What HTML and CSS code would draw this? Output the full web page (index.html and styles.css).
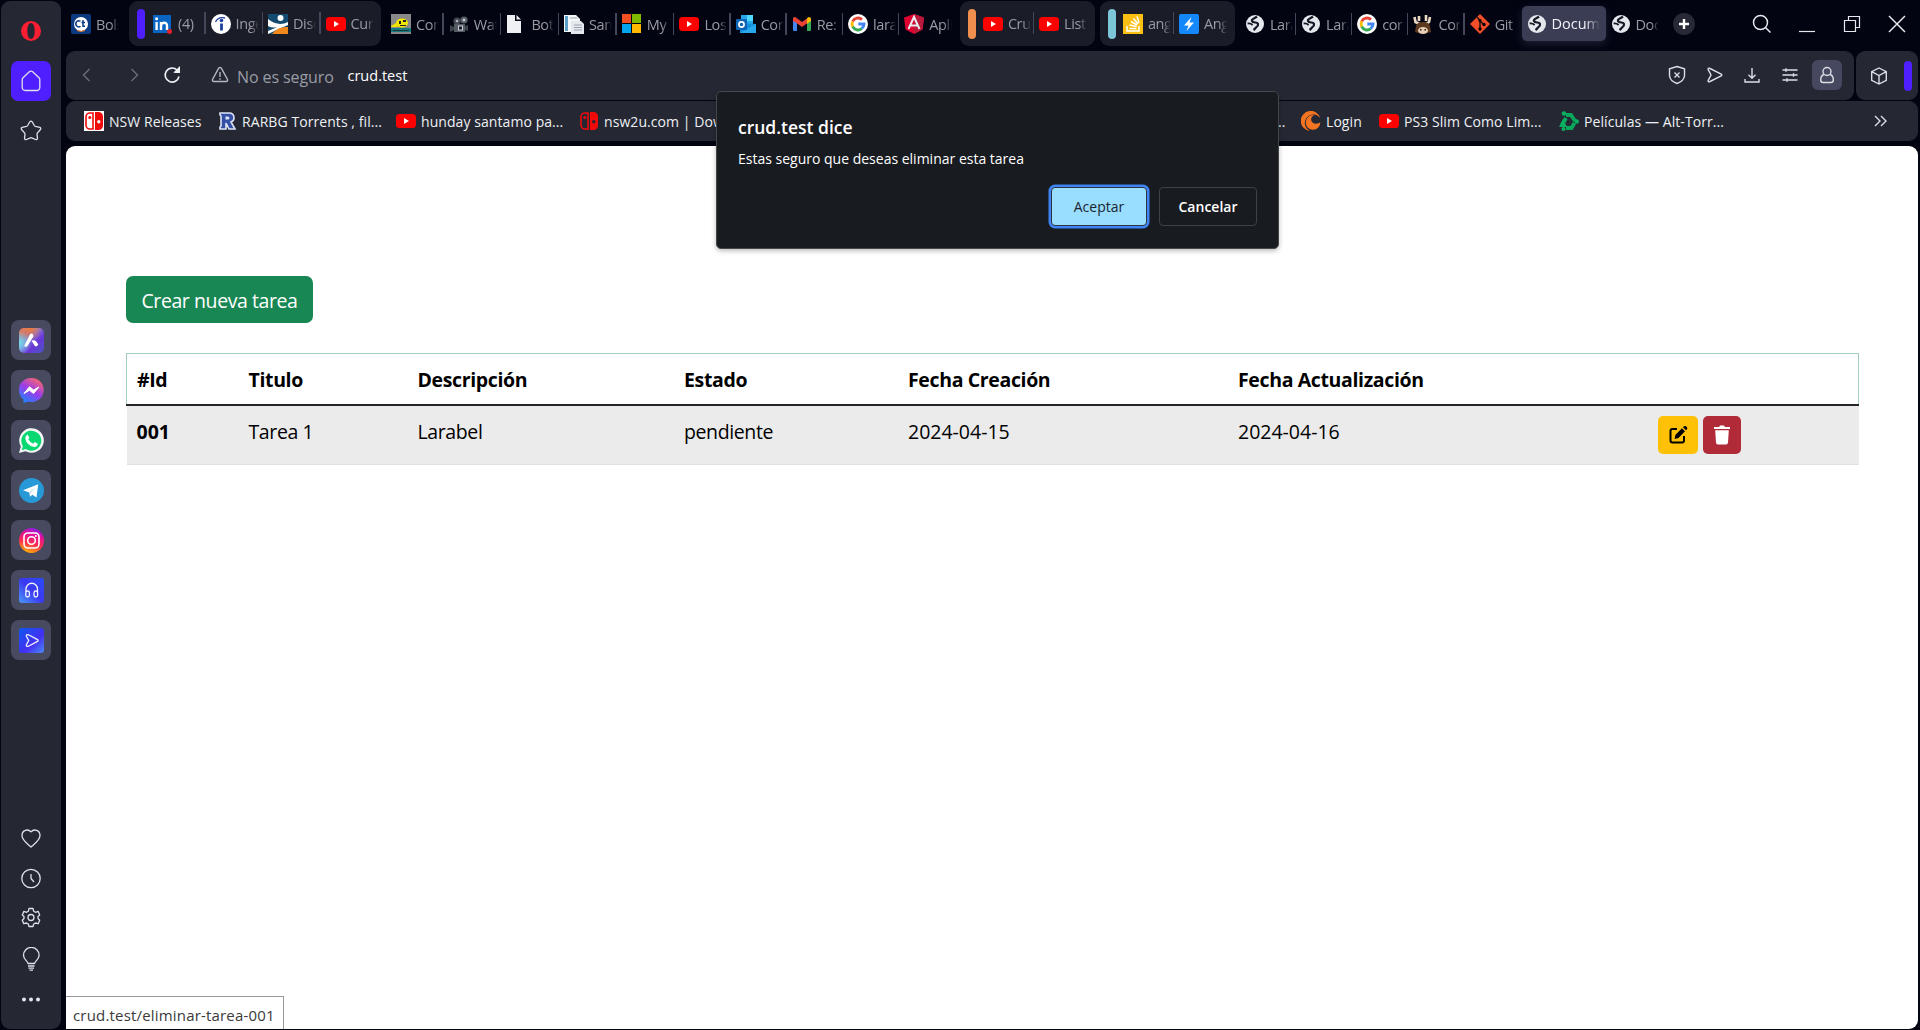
FILE: index.html
```html
<!DOCTYPE html>
<html lang="es">
<head>
<meta charset="utf-8">
<title>Document</title>
<link rel="stylesheet" href="styles.css">
</head>
<body>
<svg class="sprite" width="0" height="0">
  <defs>
    <linearGradient id="g-aria" x1="0" y1="0" x2="1" y2="1"><stop offset="0" stop-color="#f07a4a"/><stop offset=".4" stop-color="#8a7ad0"/><stop offset=".65" stop-color="#6a35d8"/><stop offset="1" stop-color="#4a58c0"/></linearGradient>
    <radialGradient id="g-aria2" cx="0" cy=".6" r=".5"><stop offset="0" stop-color="#6fe0ee"/><stop offset="1" stop-color="#6fe0ee" stop-opacity="0"/></radialGradient>
    <radialGradient id="g-aria3" cx=".45" cy="0" r=".5"><stop offset="0" stop-color="#f07a3c"/><stop offset="1" stop-color="#f07a3c" stop-opacity="0"/></radialGradient>
    <linearGradient id="g-msg" x1=".2" y1="1" x2=".8" y2="0"><stop offset="0" stop-color="#1688ff"/><stop offset=".5" stop-color="#9b3bea"/><stop offset="1" stop-color="#ff6a68"/></linearGradient>
    <linearGradient id="g-insta" x1=".3" y1="1" x2=".6" y2="0"><stop offset="0" stop-color="#ffb800"/><stop offset=".4" stop-color="#ff2b50"/><stop offset=".75" stop-color="#e2109e"/><stop offset="1" stop-color="#8a1ee8"/></linearGradient>
    <linearGradient id="g-player" x1="0" y1="1" x2="1" y2="0"><stop offset="0" stop-color="#4a9cf8"/><stop offset=".5" stop-color="#3c38f0"/><stop offset="1" stop-color="#2a4cf8"/></linearGradient>
    <linearGradient id="g-flow" x1="0" y1="0" x2="1" y2="1"><stop offset="0" stop-color="#0e58f0"/><stop offset=".6" stop-color="#4430f0"/><stop offset="1" stop-color="#4a8cf8"/></linearGradient>
  </defs>
  <symbol id="yt" viewBox="0 0 20 20"><rect y="3" width="20" height="14" rx="3.5" fill="#f00"/><path d="M8 7l5 3-5 3z" fill="#fff"/></symbol>
  <symbol id="globe" viewBox="0 0 20 20"><circle cx="10" cy="10" r="9" fill="#e4e7ec"/><path d="M12 2.600C10 4.500 6 4.500 7 7s5.500.5 6 3-1.500 3-2 3.500-1 1.500-2.500 2.500" fill="none" stroke="#141824" stroke-width="2.200"/><path d="M2.600 9.500q3-.5 5 1.500" fill="none" stroke="#141824" stroke-width="1.800"/></symbol>
  <symbol id="google" viewBox="0 0 20 20"><circle cx="10" cy="10" r="10" fill="#fff"/><g fill="none" stroke-width="2.900"><path d="M4.700 7.300A6 6 0 0 1 14 5.600" stroke="#ea4335"/><path d="M4.700 7.300a6 6 0 0 0 0 5.500" stroke="#fbbc05"/><path d="M4.700 12.700a6 6 0 0 0 9 2" stroke="#34a853"/><path d="M13.600 14.700A6 6 0 0 0 16 10H10.300" stroke="#4285f4"/></g></symbol>
  <symbol id="switch" viewBox="0 0 20 20"><path d="M9 2H6a4 4 0 0 0-4 4v8a4 4 0 0 0 4 4h3z" fill="none" stroke="#f00a0a" stroke-width="1.600"/><circle cx="5.800" cy="6.500" r="1.500" fill="#f00a0a"/><path fill-rule="evenodd" d="M11 1h3.500A4.500 4.500 0 0 1 19 5.500v9a4.500 4.500 0 0 1-4.500 4.500H11zM14.800 9a1.700 1.700 0 1 0 0 3.400 1.700 1.700 0 0 0 0-3.400z" fill="#f00a0a"/></symbol>
</svg>

<aside class="sidebar">
  <svg class="opera" viewBox="0 0 20 20"><path fill-rule="evenodd" fill="#fa1e33" d="M10 0a10 10 0 1 0 0 20 10 10 0 0 0 0-20zm0 2c2.300 0 3.700 3.600 3.700 8s-1.400 8-3.700 8-3.700-3.600-3.700-8 1.400-8 3.700-8z"/></svg>
  <div class="home"><svg class="line" width="20" height="22" viewBox="0 0 20 22"><path d="M1.200 9.500Q1.200 8.500 2 7.700L8.600 1.600Q10 .5 11.400 1.600L18 7.700Q18.800 8.500 18.800 9.500V17Q18.800 20.500 15.500 20.500H4.500Q1.200 20.500 1.200 17z"/></svg></div>
  <svg class="line star" width="22" height="21" viewBox="0 0 22 21"><path d="M9.800 1.800Q11 .3 12.200 1.800L14.300 5.500Q14.700 6.100 15.400 6.300L19.800 7.300Q21.400 8 20.400 9.500L17.300 13.100Q17 13.600 17 14.200L17.500 18.200Q17.200 20 15.600 19.500L11.600 17.800Q11 17.600 10.400 17.800L6.400 19.500Q4.800 20 4.500 18.200L5 14.200Q5 13.600 4.700 13.100L1.600 9.500Q.6 8 2.200 7.300L6.600 6.300Q7.300 6.100 7.700 5.500z"/></svg>
  <div class="apps">
    <div class="app"><svg viewBox="0 0 25 25"><rect width="25" height="25" rx="5" fill="url(#g-aria)"/><rect width="25" height="25" rx="5" fill="url(#g-aria2)"/><rect width="25" height="25" rx="5" fill="url(#g-aria3)"/><path d="M11.200 6q1.300-1.200 2.500 0l.8 2.200-6.500 10.500-3-.4zM12.500 12.800q2.200-1.300 4.500.5l2.300 3q-.8 2.700-3.300 2z" fill="#fff"/></svg></div>
    <div class="app"><svg viewBox="0 0 25 25"><path d="M12.500 0a12 12 0 1 1-3.200 23.500L4.500 25v-3.500A12 12 0 0 1 12.500 0z" fill="url(#g-msg)"/><path d="M5 15.500l5.500-6.700 4 3.200 5.500-3-5.500 6.500-4-3.200z" fill="#fff" stroke="#fff"/></svg></div>
    <div class="app"><svg viewBox="0 0 25 25"><path d="M0 25l1.800-6.500A12.300 12.300 0 1 1 6.500 23.200z" fill="#f4f6f6"/><path d="M2.800 22.200l1.100-4.100a10 10 0 1 1 3 3z" fill="#08d872"/><path d="M8.700 6.500l1.600 3.200-1 1.500q1.700 3.200 4.900 4.500l1.400-1.600 3.200 1.600q-.3 3-3.500 3.200-7.700-1.500-9-8.500-.1-2.800 2.400-3.900z" fill="#fff"/></svg></div>
    <div class="app"><svg viewBox="0 0 25 25"><circle cx="12.500" cy="12.500" r="12.500" fill="#2699d6"/><path d="M4 12.200L19.200 6.200 17.500 19.500l-4.200-2.800-2.300 2-.7-4.200z" fill="#fff"/><path d="M10.300 14.500l6.500-5.800-5.500 6.700z" fill="#b8d8ee"/></svg></div>
    <div class="app"><svg viewBox="0 0 25 25"><circle cx="12.500" cy="12.500" r="12.500" fill="url(#g-insta)"/><g fill="none" stroke="#fff" stroke-width="1.600"><rect x="5" y="5" width="15" height="15" rx="4"/><circle cx="12.500" cy="12.500" r="3.800"/></g><circle cx="16.800" cy="8" r="1" fill="#fff"/></svg></div>
    <div class="app"><svg viewBox="0 0 25 25"><rect width="25" height="25" rx="3" fill="url(#g-player)"/><g fill="none" stroke="#f0f2ff" stroke-width="1.300"><path d="M7 14V11a5.500 5.500 0 0 1 11.500 0v3"/><rect x="6.800" y="13" width="3.600" height="6" rx="1.800"/><rect x="15" y="13" width="3.600" height="6" rx="1.800"/></g></svg></div>
    <div class="app"><svg viewBox="0 0 25 25"><rect width="25" height="25" rx="3" fill="url(#g-flow)"/><path d="M7.500 8.500Q6.800 5.800 9.500 6.800L18.500 11.600Q19.700 12.500 18.500 13.400L9.500 18.200Q6.800 19.200 7.500 16.500L9.700 12.500z" fill="none" stroke="#f0f2ff" stroke-width="1.300"/></svg></div>
  </div>
  <div class="tools">
    <svg class="line" viewBox="0 0 20 20"><path d="M10 3.400C7 0 1 1.500 1 7c0 4.500 4.500 7.500 9 11.500 4.500-4 9-7 9-11.500 0-5.500-6-7-9-3.600z"/></svg>
    <svg class="line" viewBox="0 0 20 20"><circle cx="10" cy="10" r="9.200"/><path d="M10 5.500V10l3 3.500"/></svg>
    <svg class="line" viewBox="0 0 20 20"><circle cx="10" cy="10" r="3"/><path d="M8 1h4l.7 2.800 1.700 1 2.800-.9 1.500 3.600L17 9v2l1.700 1.700-1.500 3.500-2.800-.7-1.700 1L12 19H8l-.7-2.500-1.700-1-2.800.7-1.500-3.500L3 11V9L1.300 7.500l1.500-3.600 2.800.9 1.700-1z"/></svg>
    <svg class="line" viewBox="0 0 20 24"><path d="M7 16.500c0-2-4.500-4-4.500-8.300a7.800 7.800 0 0 1 15.600 0c0 4.300-4.500 6.300-4.500 8.300zM7 19h6.500M7.500 21.200h5.500M8.500 23.200h3.500"/></svg>
    <svg viewBox="0 0 20 20" fill="#e4e6ee"><circle cx="3" cy="10" r="2"/><circle cx="10" cy="10" r="2"/><circle cx="17" cy="10" r="2"/></svg>
  </div>
</aside>

<div class="browser">
  <header class="tabstrip">
    <div class="tab first"><svg class="fav" viewBox="0 0 20 20"><rect width="20" height="20" rx="2" fill="#0c3a80"/><circle cx="10" cy="10" r="7" fill="#fff"/><path d="M9.500 7.300a3 3 0 1 0 0 5M12 6v6.300h2M10.500 8.500h3.500" fill="none" stroke="#0c3a80" stroke-width="1.500"/><path d="M6 16.500q4 2 8 0" stroke="#f07a20" fill="none"/></svg><span>Bols</span></div>
    <div class="group one"><i class="mark violet"></i>
      <div class="tab sep"><svg class="fav" viewBox="0 0 20 20"><rect y="1" width="18" height="18" fill="#0a66c2"/><path d="M3.600 8v8M8 8v8M8 12c0-4 6-4.500 6-.5V16" fill="none" stroke="#fff" stroke-width="2.400"/><circle cx="3.600" cy="4.800" r="1.500" fill="#fff"/><circle cx="16.500" cy="17.500" r="2.500" fill="#e0202a"/></svg><span>(4)</span></div>
      <div class="tab sep"><svg class="fav" viewBox="0 0 20 20"><circle cx="10" cy="10" r="10" fill="#fff"/><path d="M4.500 8q2.500-5.500 9.500-4" fill="none" stroke="#1a3f9c" stroke-width="1.300"/><circle cx="10.500" cy="6.500" r="1.800" fill="#1a3f9c"/><path d="M10.500 9.500v7" fill="none" stroke="#1a3f9c" stroke-width="2.800"/></svg><span>Inge</span></div>
      <div class="tab sep"><svg class="fav" viewBox="0 0 20 20"><rect width="20" height="20" fill="#134a70"/><circle cx="12.500" cy="4" r="3" fill="#fff"/><path d="M0 5q10 8 20 3v3Q10 15 0 20z" fill="#fff"/><path d="M4 20q6-8 16-7v7z" fill="#f08a1c"/><path d="M0 12q6 3 12 0L0 17z" fill="#134a70"/></svg><span>Disc</span></div>
      <div class="tab"><svg class="fav"><use href="#yt"/></svg><span>Curs</span></div>
    </div>
    <div class="tab sep wide"><svg class="fav" viewBox="0 0 20 20"><rect width="20" height="20" fill="#898989"/><rect y="14" width="20" height="4" fill="#167a80"/><ellipse cx="11" cy="9" rx="6" ry="4.600" fill="#f2e600"/><path d="M0 12l5-3 2 4H0z" fill="#f2e600"/><path d="M8 7h2v3H8zM12 6h3v2h-3zM9 11h6v1H9zM2 16h16v.7H2z" fill="#222"/></svg><span>Com</span></div>
    <div class="tab sep wide"><svg class="fav" viewBox="0 0 20 20"><circle cx="8" cy="7" r="3.600" fill="#434951"/><circle cx="15" cy="6" r="3.600" fill="#5a6068"/><circle cx="8" cy="7" r="1.300" fill="#aeb4ba"/><circle cx="15" cy="6" r="1.300" fill="#ccd2d6"/><rect x="5" y="10" width="11" height="8" fill="#555b62"/><rect x="9.500" y="12" width="4" height="4" fill="#161a20" stroke="#ccd"/><path d="M1 11l4 2v3l-4 2zM16 12l3-1v6l-3-1z" fill="#3d434b"/></svg><span>Wat</span></div>
    <div class="tab sep wide"><svg class="fav" viewBox="0 0 20 20"><path d="M1 1h8v6h6v12H1zM10.500 1L15 5.500h-4.500z" fill="#eef0f4"/></svg><span>Bot</span></div>
    <div class="tab sep wide"><svg class="fav" viewBox="0 0 20 20"><path d="M0 1h12l4 4v13H0z" fill="#f4f8fb"/><path d="M1 2h3v15H1z" fill="#5c9fc6"/><path d="M7 7h10l3 3v10H7z" fill="#e4e7eb"/><path d="M10 11h8M10 13.500h8M10 16h8M6 4h7" stroke="#9aa5b0"/></svg><span>Sam</span></div>
    <div class="tab sep wide"><svg class="fav" viewBox="0 0 20 20"><path d="M0 0h9v9H0z" fill="#f25022"/><path d="M10 0h9v9h-9z" fill="#7fba00"/><path d="M0 10h9v9H0z" fill="#00a4ef"/><path d="M10 10h9v9h-9z" fill="#ffb900"/></svg><span>My</span></div>
    <div class="tab sep"><svg class="fav"><use href="#yt"/></svg><span>Los</span></div>
    <div class="tab sep"><svg class="fav" viewBox="0 0 20 20"><path d="M5 1h12v12H5z" fill="#28a8ea"/><path d="M11 1h6v6h-6z" fill="#50d9ff"/><path d="M4 9l16 1v9H4z" fill="#1490df"/><path d="M4 19l16-9v9z" fill="#28a8ea"/><rect y="5" width="11" height="11" rx="1" fill="#0a64b8"/><circle cx="5.500" cy="10.500" r="2.600" fill="none" stroke="#fff" stroke-width="1.600"/></svg><span>Cor</span></div>
    <div class="tab sep"><svg class="fav" viewBox="0 0 20 20"><path d="M1 4l4 3v10H2q-1 0-1-1z" fill="#4285f4"/><path d="M15 7l4-3v12q0 1-1 1h-3z" fill="#34a853"/><path d="M1 4.500Q2 2 4.500 4L10 8l5.500-4v5L10 13 4.500 9 1 7z" fill="#ea4335"/><path d="M15 4.300Q18 1.500 19 5v2l-4 3z" fill="#fbbc04"/></svg><span>Re:</span></div>
    <div class="tab sep"><svg class="fav"><use href="#google"/></svg><span>lara</span></div>
    <div class="tab end"><svg class="fav" viewBox="0 0 20 20"><path d="M10 0l10 3.500-1.500 12L10 20l-8.500-4.500L0 3.500z" fill="#dd0031"/><path d="M10 0l10 3.500-1.500 12L10 20z" fill="#b8183a"/><path d="M4.500 15L10 3l5.500 12M6.500 11.500h7" fill="none" stroke="#e9edf0" stroke-width="2"/></svg><span>Apli</span></div>
    <div class="group two"><i class="mark orange"></i>
      <div class="tab sep"><svg class="fav"><use href="#yt"/></svg><span>Crud</span></div>
      <div class="tab"><svg class="fav"><use href="#yt"/></svg><span>List</span></div>
    </div>
    <div class="group two"><i class="mark cyan"></i>
      <div class="tab sep"><svg class="fav" viewBox="0 0 20 20"><rect width="20" height="20" fill="#fbbf12"/><path d="M4 12v5h12v-5M6.500 14.500h7M6.500 11l7 1.500M8 7.500l6 3.500M10.500 4.500l4.500 5.500M14 2.500l2 6.500" fill="none" stroke="#fff" stroke-width="1.500"/></svg><span>ang</span></div>
      <div class="tab"><svg class="fav" viewBox="0 0 20 20"><rect width="20" height="20" rx="2" fill="#1488fb"/><path d="M12.500 3L5 11.500h4.500L7.500 17 15 8.500h-4.500z" fill="#fff"/></svg><span>Ang</span></div>
    </div>
    <div class="tab sep"><svg class="fav"><use href="#globe"/></svg><span>Lara</span></div>
    <div class="tab sep"><svg class="fav"><use href="#globe"/></svg><span>Lara</span></div>
    <div class="tab sep"><svg class="fav"><use href="#google"/></svg><span>cor</span></div>
    <div class="tab sep"><svg class="fav" viewBox="0 0 20 20"><path d="M1.500 3l1 5 4 2M6 2v5M17 3l-1 5-3 2M13 1v6" fill="none" stroke="#ead9c4" stroke-width="2.600"/><path d="M3 12q1-4 7-4t7 4l1 6q-8 3-16 0z" fill="#5c3a20"/><ellipse cx="10" cy="16.500" rx="5" ry="3.500" fill="#e6cfb6"/><path d="M7 15h1.500v1.500H7zM11.500 15H13v1.500h-1.500z" fill="#2a1a10"/></svg><span>Cor</span></div>
    <div class="tab end git"><svg class="fav" viewBox="0 0 20 20"><path d="M10 0l10 10-10 10L0 10z" fill="#f24e29"/><path d="M7 3l3 3.500v9M10 7l4 3.500" fill="none" stroke="#20130f" stroke-width="1.500"/><circle cx="10" cy="15" r="1.700"/><circle cx="14" cy="10.500" r="1.700"/><circle cx="10" cy="6.500" r="1.500"/></svg><span>Git</span></div>
    <div class="tab active"><svg class="fav"><use href="#globe"/></svg><span>Docume</span></div>
    <div class="tab last"><svg class="fav"><use href="#globe"/></svg><span>Doc</span></div>
    <div class="newtab"><svg viewBox="0 0 12 12"><path d="M6 1v10M1 6h10" stroke="#fff" stroke-width="2.400"/></svg></div>
    <div class="window">
      <svg viewBox="0 0 20 20"><circle cx="8.500" cy="8.500" r="7"/><path d="M13.500 13.500l5 5"/></svg>
      <svg viewBox="0 0 20 20" class="thin"><path d="M2 17.500h16"/></svg>
      <svg viewBox="0 0 20 20" class="thin"><path d="M2.500 6.500h11v11h-11zM6.500 6.500v-4h11v11h-4"/></svg>
      <svg viewBox="0 0 20 20"><path d="M2 2l16 16M18 2L2 18"/></svg>
    </div>
  </header>

  <div class="navrow">
    <div class="address">
      <svg class="nav dim" viewBox="0 0 20 20"><path d="M12.500 4l-6 6 6 6"/></svg>
      <svg class="nav dim fwd" viewBox="0 0 20 20"><path d="M7.500 4l6 6-6 6"/></svg>
      <svg class="nav reload" viewBox="0 0 20 20"><path d="M17 11.500A7 7 0 1 1 15 5l2 2M17.200 2.700v4.500h-4.500"/><path d="M17.200 3v4h-4z" fill="#f0f1f5"/></svg>
      <svg class="nav warn" viewBox="0 0 20 20"><path d="M8.700 3.200Q10 1.500 11.300 3.200L17.500 14.500Q18 16.500 16 16.500H4Q2 16.500 2.500 14.500zM10 7v5M10 13.200v1.500"/></svg>
      <span class="insecure">No es seguro</span>
      <span class="url">crud.test</span>
      <div class="actions">
        <svg class="nav" viewBox="0 0 20 20"><path d="M10 1.500l7.500 2.300v7Q17 16 10 18.500 3 16 2.500 10.800v-7zM7.500 7.500l5 5M12.500 7.500l-5 5"/></svg>
        <svg class="nav" viewBox="0 0 20 20"><path d="M3.200 4.700Q2.500 2.500 5 3.500L16.200 9Q17.500 10 16.200 11L5 16.500Q2.500 17.500 3.200 15.300L6 10z"/></svg>
        <svg class="nav" viewBox="0 0 20 20"><path d="M10 3v10M6.500 9.800L10 13.200l3.500-3.400M3 14v3h14v-3"/></svg>
        <svg class="nav" viewBox="0 0 20 20"><path d="M2.500 5h15M2.500 10h15M2.500 15h15M6 3.300v3.400M13.500 8.300v3.400M7 13.300v3.400"/></svg>
        <div class="user"><svg class="nav" viewBox="0 0 20 20"><circle cx="10" cy="6.500" r="4"/><path d="M6.800 9.500C4 10.500 3.700 13 3.700 15q0 2.500 2.500 2.500h7.600q2.500 0 2.500-2.500c0-2-.3-4.500-3.100-5.500"/></svg></div>
      </div>
    </div>
    <div class="cube">
      <svg class="nav" viewBox="0 0 20 20"><path d="M10 2l7.300 3.700v8.600L10 18l-7.300-3.700V5.700zM2.700 5.700L10 9.500l7.300-3.800M10 9.500V18"/></svg>
      <i class="mark violet"></i>
    </div>
  </div>

  <nav class="bookmarks">
    <div class="bm b1"><svg class="fav" viewBox="0 0 20 20"><rect width="20" height="20" fill="#fff"/><use href="#switch"/></svg><span>NSW Releases</span></div>
    <div class="bm b2"><svg class="fav" viewBox="0 0 20 20"><path d="M3 2h9q5 0 5 5 0 3-3 4l4 7h-6l-3-6v6H3V16l1-1V5L3 4z" fill="#3350a4" stroke="#dce3f5" stroke-width="1.600"/><path d="M8.500 5.500h2q2 0 2 1.500t-2 1.500h-2z" fill="#dce3f5"/></svg><span>RARBG Torrents , fil...</span></div>
    <div class="bm b3"><svg class="fav"><use href="#yt"/></svg><span>hunday santamo pa...</span></div>
    <div class="bm b4"><svg class="fav"><use href="#switch"/></svg><span>nsw2u.com | Dow</span></div>
    <div class="bm rest">..</div>
    <div class="bm b5"><svg class="fav" viewBox="0 0 20 20"><path d="M19.500 7.500A10 10 0 1 0 9 19.900 8.500 8.500 0 1 1 19.500 7.500z" fill="#f47521"/><path d="M13 4.200A7.300 7.300 0 1 0 19.300 11a4 4 0 0 1-3.300 1.500 4 4 0 0 1-3-8.300z" fill="#f47521"/></svg><span>Login</span></div>
    <div class="bm b6"><svg class="fav"><use href="#yt"/></svg><span>PS3 Slim Como Lim...</span></div>
    <div class="bm b7"><svg class="fav" viewBox="0 0 20 20"><path d="M7 4h5l4 6M15.500 12l-3 5H7M3 14l4-7" fill="none" stroke="#08a85c" stroke-width="3.800"/><g fill="#08b060"><circle cx="5" cy="2.500" r="2.300"/><circle cx="17.700" cy="10.500" r="2.300"/><circle cx="4.500" cy="18" r="2"/><path d="M0 16l4-8 4 8z"/></g></svg><span>Películas — Alt-Torr...</span></div>
    <svg class="nav more" viewBox="0 0 20 20"><path d="M4 5l5 5-5 5M10 5l5 5-5 5"/></svg>
  </nav>

  <main class="page">
    <a class="create">Crear nueva tarea</a>
    <table class="tasks">
      <colgroup><col class="c-id"><col class="c-title"><col class="c-desc"><col class="c-state"><col class="c-made"><col class="c-upd"><col class="c-act"></colgroup>
      <thead><tr><th>#Id</th><th>Titulo</th><th>Descripción</th><th>Estado</th><th>Fecha Creación</th><th>Fecha Actualización</th><th></th></tr></thead>
      <tbody><tr><th>001</th><td>Tarea 1</td><td>Larabel</td><td>pendiente</td><td class="date">2024-04-15</td><td class="date">2024-04-16</td>
        <td><div class="rowbtns">
          <a class="edit"><svg width="20" height="20" viewBox="0 0 20 20"><path d="M9 4H4.500Q2.500 4 2.500 6v9.500q0 2 2 2H14q2 0 2-2V11" fill="none" stroke="#000" stroke-width="2"/><path d="M6.500 14l1-4.200 6.500-6.500 3 3-6.500 6.600zM15 2.300l1-1q1-.8 2 0l1 1q.8 1 0 2l-1 1z"/></svg></a>
          <a class="del"><svg width="18" height="20" viewBox="0 0 18 20" fill="#fff"><path d="M1 2h5l1-1.500h4L12 2h5v2H1zM2.200 5.200h13.600L15 17.500q-.2 2-2 2H5q-1.800 0-2-2z"/></svg></a>
        </div></td></tr></tbody>
    </table>
    <div class="status">crud.test/eliminar-tarea-001</div>
  </main>
</div>

<div class="dialog">
  <h1>crud.test dice</h1>
  <p>Estas seguro que deseas eliminar esta tarea</p>
  <div class="choices"><button class="ok">Aceptar</button><button class="cancel">Cancelar</button></div>
</div>
</body>
</html>
```
FILE: styles.css
```css
* { box-sizing: border-box; }
body {
  margin: 0;
  width: 1920px;
  height: 1030px;
  overflow: hidden;
  display: flex;
  gap: 5px;
  padding: 1px 2px 1px 1px;
  background: #020412;
  font-family: "Open Sans", "Noto Sans", sans-serif;
  position: relative;
}
svg { display: block; flex: none; }
.sprite { position: absolute; }
.line { fill: none; stroke: #dfe1e9; stroke-width: 1.3; stroke-linejoin: round; }

/* sidebar */
.sidebar {
  width: 60px;
  flex: none;
  background: #252833;
  border-radius: 9px;
  display: flex;
  flex-direction: column;
  align-items: center;
}
.opera { width: 20px; height: 20px; margin-top: 20px; }
.home {
  width: 40px;
  height: 40px;
  margin-top: 20px;
  border-radius: 7px;
  background: #4f1fff;
  display: grid;
  place-items: center;
}
.star { margin-top: 19px; }
.apps { margin-top: 179px; display: grid; gap: 10px; }
.app {
  width: 40px;
  height: 40px;
  border-radius: 8px;
  background: #484b60;
  display: grid;
  place-items: center;
}
.app svg { width: 25px; height: 25px; }
.tools {
  margin-top: auto;
  margin-bottom: 19px;
  height: 182px;
  display: flex;
  flex-direction: column;
  justify-content: space-between;
}
.tools svg { width: 20px; height: 21px; }
.tools svg:nth-child(4) { height: 24px; }

/* tabs */
.browser { flex: 1; min-width: 0; display: flex; flex-direction: column; }
.tabstrip { height: 50px; display: flex; flex: none; }
.tab {
  width: 56.2px;
  height: 46px;
  flex: none;
  padding-left: 5px;
  display: flex;
  align-items: center;
  gap: 5px;
  color: #9b9ca2;
  font-size: 14.5px;
  position: relative;
}
.tab > span {
  width: 23px;
  overflow: hidden;
  white-space: nowrap;
  letter-spacing: -0.4px;
  -webkit-mask-image: linear-gradient(90deg, #000 65%, transparent);
  mask-image: linear-gradient(90deg, #000 65%, transparent);
}
.fav { width: 20px; height: 20px; }
.sep::after {
  content: "";
  position: absolute;
  right: 0;
  top: 12px;
  width: 1.5px;
  height: 22px;
  background: #44475a;
}
.wide { width: 57.7px; }
.first { width: 58px; }
.end { width: 56px; margin-right: 4.7px; }
.group {
  height: 45px;
  border-radius: 9px;
  background: #1a1c28;
  display: flex;
  align-items: center;
  padding-left: 8px;
  flex: none;
  margin-right: 5px;
}
.group .tab { height: 48px; }
.one { margin-left: 5px; width: 252px; }
.one .tab { width: 57.5px; }
.one .mark { margin-right: 3px; }
.two { width: 135px; }
.mark { width: 8px; height: 30px; border-radius: 4px; margin-right: 2px; flex: none; }
.violet { background: #4f1fff; }
.orange { background: #f08f4e; }
.cyan { background: #7dc5d8; }
.git { width: 52.2px; }
.active {
  width: 84px;
  height: 35px;
  margin-top: 5px;
  border-radius: 5px;
  background: #3b3d54;
  color: #f1f2f6;
  box-shadow: 0 3px 9px #3b3d5480;
}
.active > span { width: 48px; letter-spacing: 0; -webkit-mask-image: linear-gradient(90deg, #000 70%, transparent); mask-image: linear-gradient(90deg, #000 70%, transparent); }
.last { width: 67px; }
.newtab {
  width: 22px;
  height: 22px;
  margin-top: 12px;
  border-radius: 50%;
  background: #272a36;
  display: grid;
  place-items: center;
}
.newtab svg { width: 12px; height: 12px; }
.window { margin-left: auto; display: flex; gap: 25px; padding: 13px 11px 0 0; }
.window svg { width: 20px; height: 20px; fill: none; stroke: #e8e9ee; stroke-width: 1.5; }
.window .thin { stroke-width: 1.2; }

/* address row */
.navrow { display: flex; gap: 2px; height: 49px; flex: none; }
.address, .cube { background: #252833; border-radius: 9px; display: flex; align-items: center; }
.address { width: 1788px; padding-left: 11px; padding-bottom: 1px; }
.nav { width: 20px; height: 20px; fill: none; stroke: #dcdee6; stroke-width: 1.4; }
.dim { stroke: #6a6d79; }
.fwd { margin-left: 27px; }
.reload { margin-left: 18px; stroke-width: 1.6; stroke: #f0f1f5; }
.warn { margin-left: 28px; stroke: #b6b8c0; }
.insecure { margin: 4px 0 0 7px; width: 96px; font-size: 16px; letter-spacing: -0.1px; color: #9a9ca4; white-space: nowrap; }
.url { margin-left: 14.5px; font-size: 14.5px; color: #fff; }
.actions { margin-left: auto; padding-right: 12px; display: flex; align-items: center; gap: 17.5px; }
.user { width: 30px; height: 30px; border-radius: 6px; background: #45485f; display: grid; place-items: center; margin-left: -4px; }
.actions > .nav { position: relative; left: 1px; }
.cube { width: 62px; padding-left: 13px; }
.cube .mark { margin-left: 15px; }

/* bookmarks */
.bookmarks {
  height: 40px;
  margin-top: 1px;
  flex: none;
  border-radius: 9px;
  background: #252833;
  display: flex;
  align-items: center;
  padding-left: 18px;
  color: #eef0f4;
  font-size: 14px;
  letter-spacing: 0.07px;
  white-space: nowrap;
}
.bm { display: flex; align-items: center; gap: 5px; flex: none; }
.b1 { width: 133px; }
.b2 { width: 179px; }
.b3 { width: 183px; }
.b4 { width: 699px; }
.rest { width: 23px; }
.b5 { width: 78px; }
.b6 { width: 180px; }
.more { margin: 0 27px 0 auto; }

/* page */
.page {
  flex: 1;
  margin-top: 5px;
  border-radius: 9px;
  background: #fff;
  padding: 130px 59px 0 60px;
  position: relative;
}
.create {
  display: block;
  width: 187px;
  height: 47px;
  border-radius: 7px;
  background: #198754;
  color: #fff;
  font-size: 19.5px;
  letter-spacing: -0.42px;
  line-height: 49px;
  text-align: center;
  white-space: nowrap;
}
.tasks {
  width: 1733px;
  margin-top: 30px;
  table-layout: fixed;
  border-collapse: collapse;
  font-size: 19.5px;
  color: #000;
}
.c-id { width: 112px; }
.c-title { width: 169px; }
.c-desc { width: 266.5px; }
.c-state { width: 224px; }
.c-made { width: 330px; }
.c-upd { width: 418.5px; }
.tasks th, .tasks td { padding: 0 0 0 10px; text-align: left; white-space: nowrap; }
.tasks td { letter-spacing: -0.38px; }
.tasks td.date { letter-spacing: 0; }
.tasks thead { border: 1px solid #a3cfbb; border-bottom: 2px solid #212529; }
.tasks thead th { height: 51px; padding-top: 2px; letter-spacing: -0.36px; }
.tasks tbody tr { background: #ebebeb; border-bottom: 1px solid #dee2e6; }
.tasks tbody th, .tasks tbody td { height: 60px; padding-bottom: 6px; }
.rowbtns { display: flex; gap: 5px; padding: 7px 0 0 1px; }
.edit, .del { height: 38px; border-radius: 5px; display: grid; place-items: center; }
.edit { width: 40px; background: #ffc107; }
.del { width: 38px; background: #b02a37; }
.status {
  position: absolute;
  left: 0;
  bottom: 0;
  width: 218px;
  height: 33px;
  border-top: 1px solid #999;
  border-right: 1px solid #999;
  background: #fff;
  color: #3a3a3a;
  font-size: 15px;
  letter-spacing: 0.18px;
  line-height: 36px;
  padding-left: 7px;
  white-space: nowrap;
}

/* confirm dialog */
.dialog {
  position: absolute;
  left: 716px;
  top: 91px;
  width: 563px;
  height: 158px;
  border: 1px solid #45474a;
  border-radius: 5px;
  background: #181b1f;
  color: #fff;
  box-shadow: 0 2px 5px #0004;
  padding: 22px 21px 0;
  white-space: nowrap;
}
.dialog h1 { margin: 0; font-size: 17.5px; font-weight: 600; line-height: 26px; }
.dialog p { margin: 8px 0 0; font-size: 14px; line-height: 22px; }
.choices { display: flex; justify-content: flex-end; gap: 12px; margin-top: 17px; }
.choices button { height: 39px; padding: 0; border-radius: 4px; font: 600 14px "Open Sans", sans-serif; }
.choices .ok { width: 96px; border: 1px solid #2b3542; background: #99ddff; color: #1a2530; box-shadow: 0 0 0 2.5px #3f84f5; font-weight: 500; }
.choices .cancel { width: 98px; border: 1px solid #3c4249; background: #181b1f; color: #fff; }
```
